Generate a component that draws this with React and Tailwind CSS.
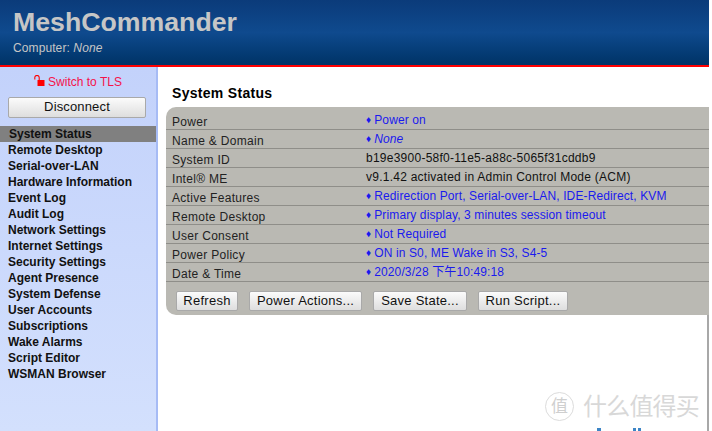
const nav = ["Remote Desktop","Serial-over-LAN","Hardware Information","Event Log","Audit Log","Network Settings","Internet Settings","Security Settings","Agent Presence","System Defense","User Accounts","Subscriptions","Wake Alarms","Script Editor","WSMAN Browser"];
const rows = [
  ["Power","Power on",1],
  ["Name & Domain","None",1,1],
  ["System ID","b19e3900-58f0-11e5-a88c-5065f31cddb9",0],
  ["Intel® ME","v9.1.42 activated in Admin Control Mode (ACM)",0],
  ["Active Features","Redirection Port, Serial-over-LAN, IDE-Redirect, KVM",1],
  ["Remote Desktop","Primary display, 3 minutes session timeout",1],
  ["User Consent","Not Required",1],
  ["Power Policy","ON in S0, ME Wake in S3, S4-5",1],
  ["Date & Time","2020/3/28 下午10:49:18",1],
];
function Btn({children, className=""}) {
  return <button className={"border border-[#a9a9a9] rounded-[2px] bg-gradient-to-b from-[#fbfbfb] to-[#dedede] text-[13px] leading-none pb-[2px] text-[#111] " + className}>{children}</button>;
}
export default function App() {
  return (
    <div className="w-[712px] h-[431px] overflow-hidden flex bg-white text-[13px]" style={{fontFamily:'"Liberation Sans","Noto Sans CJK SC",sans-serif'}}>
      <div className="w-[709px] h-full flex flex-col shrink-0">
        <header className="h-[67px] shrink-0 border-b-2 border-[#ff0000] bg-gradient-to-b from-[#0b3b7a] via-[#0f4a8e] to-[#003366] pl-[13px] flex flex-col">
          <div className="text-[26.7px] font-bold text-[#c6c6c6] leading-[32px] mt-[6px]">MeshCommander</div>
          <div className="text-[12px] text-[#c6c6c6] leading-[14px] mt-[3px] tracking-[0.1px]">Computer: <i>None</i></div>
        </header>
        <div className="flex-1 flex min-h-0">
          <aside className="w-[158px] shrink-0 bg-gradient-to-b from-[#c3d2fb] to-[#d3e0fd] border-r-2 border-[#a6bbf5] flex flex-col">
            <div className="h-[14px] mt-[8px] flex items-center justify-center gap-[3px] text-[12px] text-[#f5124a]">
              <svg width="11" height="12" viewBox="0 0 11 12" className="-mt-[2px]">
                <path d="M0.8 4.5 V2.6 a2.2 2.2 0 0 1 4.4 0 V5.5" fill="none" stroke="#ff0000" strokeWidth="1.1"/>
                <rect x="3.5" y="5" width="7" height="6" fill="#ff0000"/>
              </svg>
              <span>Switch to TLS</span>
            </div>
            <Btn className="mx-[8px] mt-[8px] w-[138px] h-[21px] tracking-[0.15px]">Disconnect</Btn>
            <div className="mt-[8px] h-[16px] w-[156px] bg-[#808080] pl-[9px] font-bold text-[12px] leading-[16px] text-[#111]">System Status</div>
            {nav.map(n => <div key={n} className="h-[16px] pl-[8px] font-bold text-[12px] leading-[16px] text-[#111]">{n}</div>)}
          </aside>
          <main className="flex-1 pl-[8px] min-w-0 flex flex-col">
            <h1 className="mt-[18px] pl-[6px] h-[22px] font-bold text-[14px] leading-[16px] text-black tracking-[0.3px]">System Status</h1>
            <div className="bg-[#bab9b3] rounded-tl-[10px] rounded-bl-[10px] pt-[4px] h-[208px] shrink-0">
              {rows.map(([k,v,d,i]) => (
                <div key={k} className="flex border-b border-[#8f8e89] h-[19px]">
                  <div className="w-[200px] pl-[6px] text-[12px] leading-[18px] pt-[2px] text-[#222] tracking-[0.3px]">{k}</div>
                  <div className={"text-[12px] leading-[18px] -mt-[0.5px] whitespace-nowrap " + (d ? "text-[#1a1aee] tracking-[0.12px]" : "text-[#111] tracking-[0.25px]")}>
                    {d ? <span className="text-[10px] mr-[3px] align-[1px]">♦</span> : null}
                    {i ? <i>{v}</i> : v}
                  </div>
                </div>
              ))}
              <div className="flex gap-[11px] pl-[10px] pt-[9px]">
                <Btn className="w-[62px] h-[20px] tracking-[0.25px]">Refresh</Btn>
                <Btn className="w-[113px] h-[20px] tracking-[0.25px]">Power Actions...</Btn>
                <Btn className="w-[94px] h-[20px] tracking-[0.25px]">Save State...</Btn>
                <Btn className="w-[90px] h-[20px] tracking-[0.25px]">Run Script...</Btn>
              </div>
            </div>
            <div className="relative flex-1 border-r-2 border-[#a8a8a8]">
              <div className="absolute left-[379px] top-[77px] flex items-center gap-[9px]">
                <div className="w-[29px] h-[29px] rounded-full border border-[#dcdcdc] flex items-center justify-center text-[17px] leading-none text-[#cfcfcf]">值</div>
                <div className="text-[24px] leading-none tracking-[-0.8px] text-[#d8d8d8] whitespace-nowrap">什么值得买</div>
              </div>
              <svg width="60" height="3" viewBox="0 0 60 3" className="absolute left-[431px] bottom-0">
                <rect x="0" y="0" width="4" height="3" fill="#3d85c6"/>
                <rect x="36" y="0" width="3" height="3" fill="#3d85c6"/>
                <rect x="41" y="0" width="3" height="3" fill="#3d85c6"/>
              </svg>
            </div>
          </main>
        </div>
      </div>
      <div className="w-[3px] h-full bg-white shrink-0" />
    </div>
  );
}
